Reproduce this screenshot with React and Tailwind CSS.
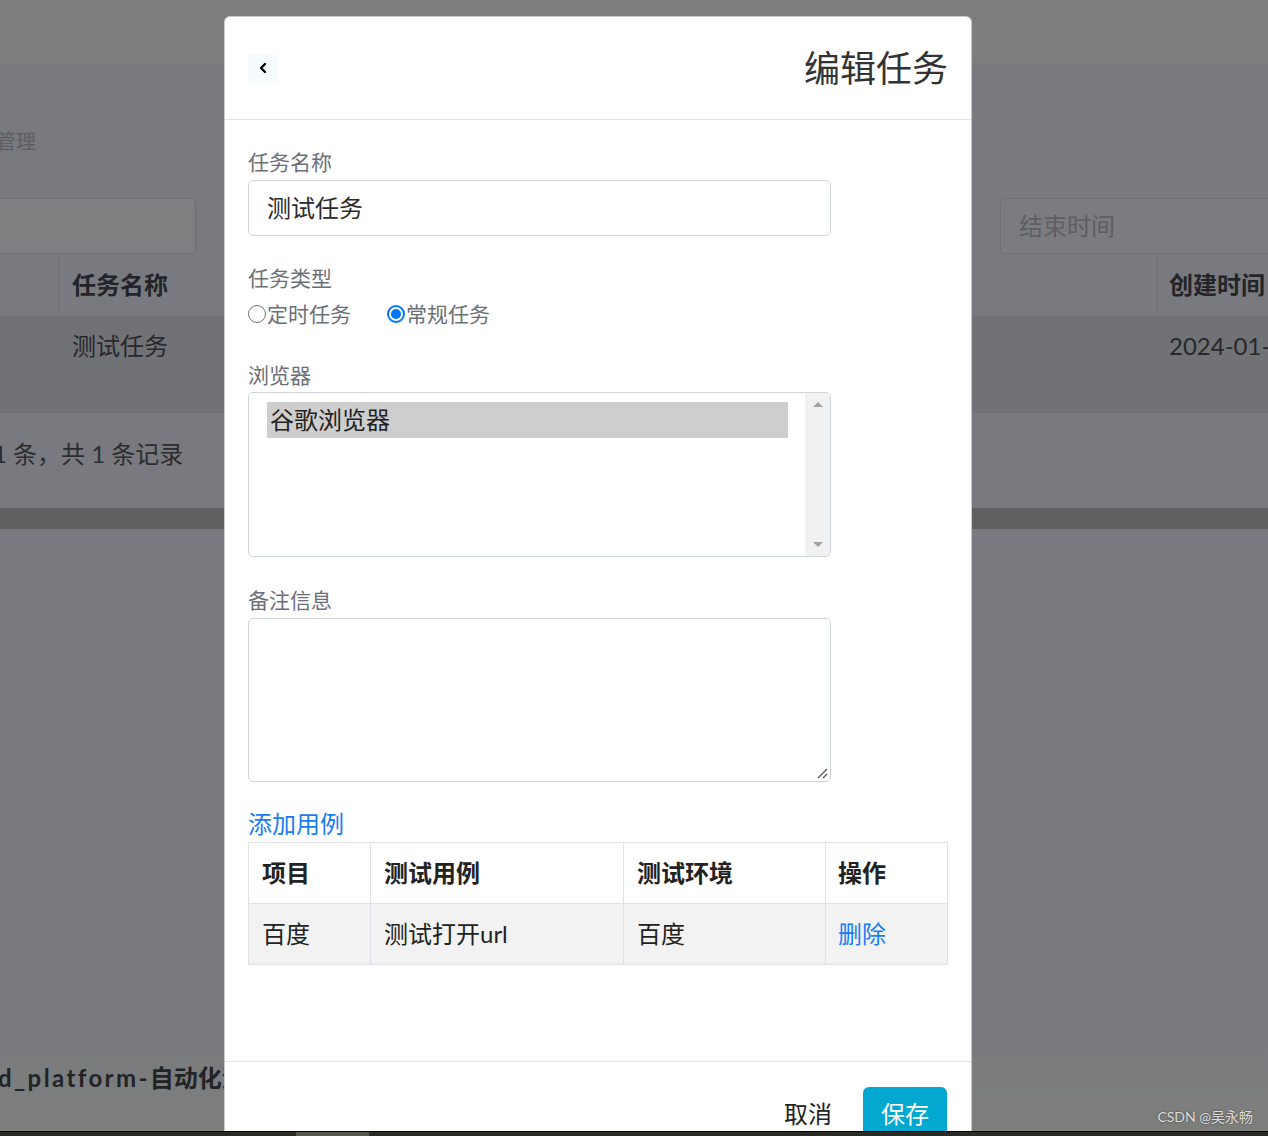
import { ChevronLeft } from "lucide-react";

const FONT = { fontFamily: '"Lato", "Noto Sans CJK SC", sans-serif' };

function BackgroundPage() {
  return (
    <div className="flex h-full flex-col">
      {/* top nav under overlay */}
      <div className="h-[63px] shrink-0 bg-[#7d7f7c]" />

      {/* main content */}
      <div className="flex flex-1 flex-col bg-[#787a7f]">
        <div className="-ml-[44px] mt-[66px] h-[24px] text-[20px] leading-[24px] text-[#5b5d62]">
          任务管理
        </div>

        <div className="mt-[45px] flex h-[56px] justify-between">
          <div className="-ml-[10px] w-[206px] rounded-[5px] border border-[#6e7074] bg-[#7e7f81]" />
          <div className="-mr-[10px] flex w-[278px] items-center rounded-[5px] border border-[#6e7074] bg-[#7b7c80] pl-[18px] text-[24px] text-[#5d5f64]">
            结束时间
          </div>
        </div>

        {/* table under overlay */}
        <div className="grid grid-cols-[59px_1098px_111px] border-b border-[#6f7175]">
          <div className="h-[62px] border-r border-[#6f7175]" />
          <div className="flex h-[62px] items-center pl-[13px] text-[24px] font-bold text-[#232428]">任务名称</div>
          <div className="flex h-[62px] items-center border-l border-[#6f7175] pl-[11px] text-[24px] font-bold whitespace-nowrap text-[#232428]">
            创建时间
          </div>
          <div className="h-[96px] border-t border-r border-[#6f7175] bg-[#717276]" />
          <div className="h-[96px] border-t border-[#6f7175] bg-[#717276] pt-[11px] pl-[13px] text-[24px] text-[#27282b]">
            测试任务
          </div>
          <div className="h-[96px] border-t border-l border-[#6f7175] bg-[#717276] pt-[11px] pl-[11px] text-[24px] whitespace-nowrap text-[#27282b]">
            2024-01-11
          </div>
        </div>

        <div className="-ml-[7px] mt-[24px] h-[34px] text-[24px] leading-[34px] text-[#2c2d30]">1 条，共 1 条记录</div>

        <div className="mt-[37px] h-[21px] bg-[#606060]" />
      </div>

      {/* footer */}
      <div className="flex h-[97px] shrink-0 items-center bg-gradient-to-b from-[#797a7e] to-[#7e7f7c] pb-[20px]">
        <span className="-ml-[2px] text-[24px] font-bold whitespace-nowrap text-[#222324]">
          <span className="tracking-[2.4px]">d_platform-</span>自动化测试平台
        </span>
      </div>
    </div>
  );
}

function Radio({ checked, label }) {
  return (
    <label className="flex items-center">
      {checked ? (
        <span className="flex h-[18px] w-[18px] items-center justify-center rounded-full border-2 border-[#0075ff] bg-white">
          <span className="h-[10px] w-[10px] rounded-full bg-[#0075ff]" />
        </span>
      ) : (
        <span className="h-[18px] w-[18px] rounded-full border border-[#767676] bg-white" />
      )}
      <span className="ml-[1px]">{label}</span>
    </label>
  );
}

function EditTaskModal() {
  const cases = [{ project: "百度", name: "测试打开url", env: "百度" }];

  return (
    <div className="absolute left-[224px] top-[16px] z-10 w-[748px] rounded-t-[6px] border border-black/20 bg-white">
      {/* header */}
      <div className="flex h-[103px] items-center justify-between border-b border-[#dee2e6] px-[23px]">
        <button className="flex h-[29px] w-[30px] items-center justify-center bg-[#f6fbfe] text-black">
          <ChevronLeft size={16} strokeWidth={3.5} />
        </button>
        <h2 className="text-[36px] leading-none text-[#333]">编辑任务</h2>
      </div>

      {/* body */}
      <div className="h-[941px] px-[23px] pt-[27px] text-[21px] text-[#6b6f77]">
        <div className="h-[30px] leading-[30px]">任务名称</div>
        <div className="mt-[3px] flex h-[56px] w-[583px] items-center rounded-[5px] border border-[#ced4da] pl-[18px] text-[24px] text-[#2b2b2b]">
          测试任务
        </div>

        <div className="mt-[27px] h-[30px] leading-[30px]">任务类型</div>
        <div className="mt-[6px] flex h-[30px] items-center gap-[36px]">
          <Radio label="定时任务" />
          <Radio checked label="常规任务" />
        </div>

        <div className="mt-[31px] h-[30px] leading-[30px]">浏览器</div>
        <div className="mt-[2px] flex h-[165px] w-[583px] overflow-hidden rounded-[5px] border border-[#ced4da]">
          <div className="flex-1 pt-[9px] pl-[18px] pr-[17px]">
            <div className="h-[36px] bg-[#cecece] pl-[3px] text-[24px] leading-[36px] text-[#222]">谷歌浏览器</div>
          </div>
          <div className="flex w-[25px] flex-col items-center justify-between bg-[#f1f1f1] py-[9px]">
            <span className="h-0 w-0 border-x-[5px] border-b-[5px] border-x-transparent border-b-[#a3a3a3]" />
            <span className="h-0 w-0 border-x-[5px] border-t-[5px] border-x-transparent border-t-[#a3a3a3]" />
          </div>
        </div>

        <div className="mt-[28px] h-[30px] leading-[30px]">备注信息</div>
        <div className="relative mt-[3px] h-[164px] w-[583px] rounded-[5px] border border-[#ced4da]">
          <svg className="absolute bottom-[2px] right-[2px]" width="12" height="12" viewBox="0 0 12 12">
            <path d="M11 2 L2 11 M11 7 L7 11" stroke="#555" strokeWidth="1.2" />
          </svg>
        </div>

        <a className="mt-[24px] block h-[36px] text-[24px] leading-[36px] text-[#1a7cf5]">添加用例</a>
        <table className="w-[700px] border-collapse text-[24px] text-[#222]">
          <thead>
            <tr className="h-[61px]">
              <th className="w-[122px] border border-[#dee2e6] pl-[13px] text-left font-bold">项目</th>
              <th className="w-[253px] border border-[#dee2e6] pl-[13px] text-left font-bold">测试用例</th>
              <th className="w-[202px] border border-[#dee2e6] pl-[13px] text-left font-bold">测试环境</th>
              <th className="border border-[#dee2e6] pl-[12px] text-left font-bold">操作</th>
            </tr>
          </thead>
          <tbody>
            {cases.map((c) => (
              <tr key={c.name} className="h-[61px] bg-[#f2f2f2]">
                <td className="border border-[#dee2e6] pl-[13px]">{c.project}</td>
                <td className="border border-[#dee2e6] pl-[13px]">{c.name}</td>
                <td className="border border-[#dee2e6] pl-[13px]">{c.env}</td>
                <td className="border border-[#dee2e6] pl-[12px] text-[#1a7cf5]">删除</td>
              </tr>
            ))}
          </tbody>
        </table>
      </div>

      {/* footer */}
      <div className="flex items-start justify-end gap-[31px] border-t border-[#dee2e6] px-[24px] pt-[25px] pb-[20px]">
        <button className="mt-[13px] text-[24px] leading-[28px] text-[#222]">取消</button>
        <button className="h-[54px] w-[84px] rounded-[6px] bg-[#03a8d0] text-[24px] text-white">保存</button>
      </div>
    </div>
  );
}

export default function App() {
  return (
    <div className="relative h-[1136px] w-[1268px] overflow-hidden" style={FONT}>
      <BackgroundPage />
      <EditTaskModal />

      {/* watermark */}
      <div className="absolute bottom-[9px] right-[15px] z-20 text-[14px] text-white/80 [text-shadow:0_0_2px_rgba(0,0,0,0.6)]">
        CSDN @吴永畅
      </div>

      {/* taskbar strip */}
      <div className="absolute bottom-0 left-0 z-20 flex h-[5px] w-full border-t border-black bg-[#2b2a25]">
        <div className="ml-[296px] w-[73px] bg-[#5a5650]" />
      </div>
    </div>
  );
}
